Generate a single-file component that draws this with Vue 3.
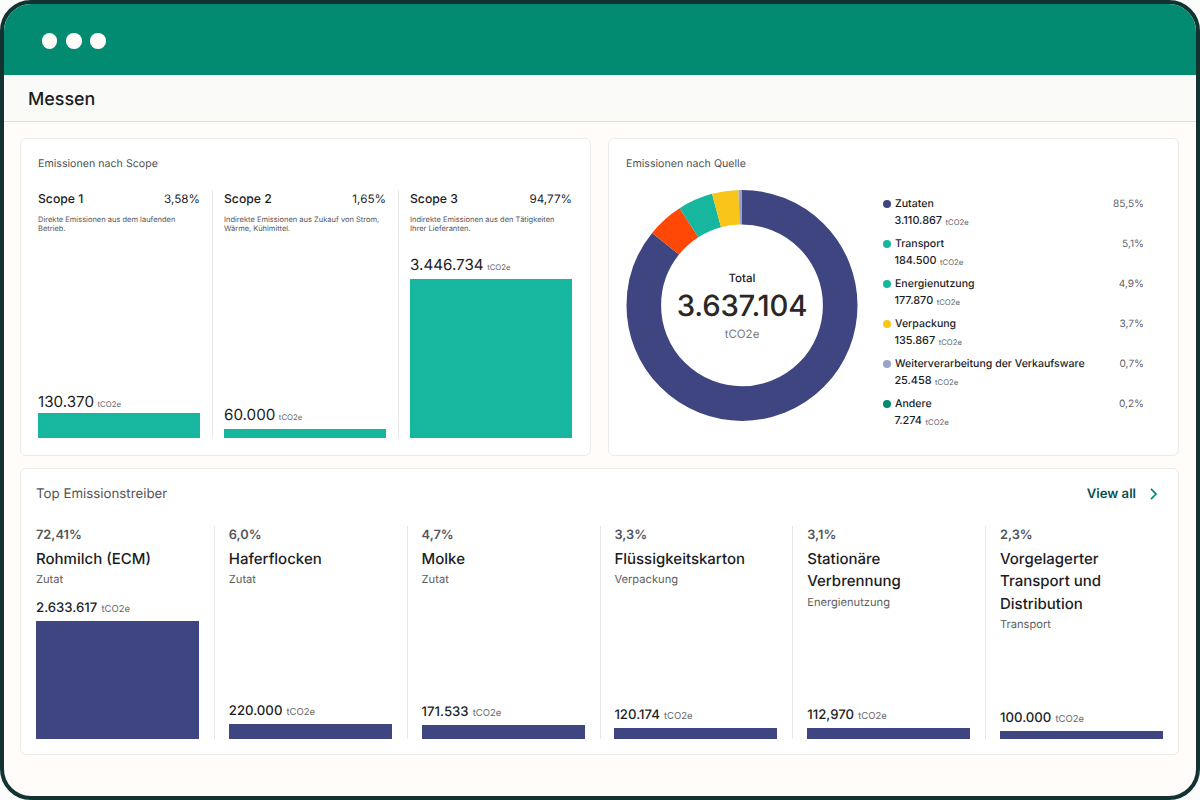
<script setup>
const scopes = [
  { name: 'Scope 1', percent: '3,58%', text: 'Direkte Emissionen aus dem laufenden Betrieb.', value: '130.370', bar: 25, gap: 0 },
  { name: 'Scope 2', percent: '1,65%', text: 'Indirekte Emissionen aus Zukauf von Strom, Wärme, Kühlmittel.', value: '60.000', bar: 9, gap: 3 },
  { name: 'Scope 3', percent: '94,77%', text: 'Indirekte Emissionen aus den Tätigkeiten Ihrer Lieferanten.', value: '3.446.734', bar: 159, gap: 3 }
];

const sources = [
  { name: 'Zutaten', value: '3.110.867', percent: '85,5%', color: '#3e4581' },
  { name: 'Transport', value: '184.500', percent: '5,1%', color: '#17b69f' },
  { name: 'Energienutzung', value: '177.870', percent: '4,9%', color: '#17b69f' },
  { name: 'Verpackung', value: '135.867', percent: '3,7%', color: '#fac519' },
  { name: 'Weiterverarbeitung der Verkaufsware', value: '25.458', percent: '0,7%', color: '#99a5c8' },
  { name: 'Andere', value: '7.274', percent: '0,2%', color: '#028b70' }
];

// start / end in grados
const segments = [
  { start: 0, end: 308.9, color: '#3e4581' },
  { start: 308.9, end: 327.3, color: '#ff4706' },
  { start: 327.3, end: 344.9, color: '#17b69f' },
  { start: 344.9, end: 358.2, color: '#fac519' },
  { start: 358.2, end: 359.6, color: '#99a5c8' },
  { start: 359.6, end: 360, color: '#17b69f' }
];

const drivers = [
  { percent: '72,41%', name: 'Rohmilch (ECM)', category: 'Zutat', value: '2.633.617', bar: 118 },
  { percent: '6,0%', name: 'Haferflocken', category: 'Zutat', value: '220.000', bar: 15 },
  { percent: '4,7%', name: 'Molke', category: 'Zutat', value: '171.533', bar: 14 },
  { percent: '3,3%', name: 'Flüssigkeitskarton', category: 'Verpackung', value: '120.174', bar: 11.5 },
  { percent: '3,1%', name: 'Stationäre Verbrennung', category: 'Energienutzung', value: '112,970', bar: 11.5 },
  { percent: '2,3%', name: 'Vorgelagerter Transport und Distribution', category: 'Transport', value: '100.000', bar: 8.5 }
];
</script>

<template>
  <div class="window">
    <div class="topbar">
      <span class="dot"></span>
      <span class="dot"></span>
      <span class="dot"></span>
    </div>
    <header class="page-header">
      <h1>Messen</h1>
    </header>

    <main class="content">
      <div class="row">
        <section class="card">
          <h2>Emissionen nach Scope</h2>
          <div class="scopes">
            <div v-for="s in scopes" :key="s.name" class="scope">
              <div class="scope-head">
                <span class="scope-name">{{ s.name }}</span>
                <span class="scope-percent">{{ s.percent }}</span>
              </div>
              <p class="scope-text">{{ s.text }}</p>
              <div class="scope-value" :style="{ marginBottom: s.gap + 'px' }">
                {{ s.value }} <small>tCO2e</small>
              </div>
              <div class="scope-bar" :style="{ height: s.bar + 'px' }"></div>
            </div>
          </div>
        </section>

        <section class="card">
          <h2>Emissionen nach Quelle</h2>
          <div class="sources">
            <div class="donut">
              <svg width="232" height="232" viewBox="-116 -116 232 232">
                <circle
                  v-for="seg in segments"
                  :key="seg.start"
                  r="98.2"
                  fill="none"
                  stroke-width="34.6"
                  pathLength="360"
                  transform="translate(0 0.4) rotate(-90)"
                  :stroke="seg.color"
                  :stroke-dasharray="`${seg.end - seg.start} 360`"
                  :stroke-dashoffset="-seg.start"
                />
              </svg>
              <div class="donut-label">
                <span class="donut-title">Total</span>
                <span class="donut-total">3.637.104</span>
                <span class="donut-unit">tCO2e</span>
              </div>
            </div>
            <ul class="legend">
              <li v-for="s in sources" :key="s.name">
                <span class="bullet" :style="{ background: s.color }"></span>
                <div class="legend-info">
                  <div class="legend-name">{{ s.name }}</div>
                  <div class="legend-value">{{ s.value }} <small>tCO2e</small></div>
                </div>
                <span class="legend-percent">{{ s.percent }}</span>
              </li>
            </ul>
          </div>
        </section>
      </div>

      <section class="card card-drivers">
        <div class="drivers-head">
          <h3>Top Emissionstreiber</h3>
          <a class="view-all">
            View all
            <svg width="8" height="12" viewBox="0 0 8 12">
              <path d="M1 0.9 L6 6 L1 11.1" fill="none" stroke="#028b70" stroke-width="1.7" />
            </svg>
          </a>
        </div>
        <div class="drivers">
          <div v-for="d in drivers" :key="d.name" class="driver">
            <div class="driver-percent">{{ d.percent }}</div>
            <div class="driver-name">{{ d.name }}</div>
            <div class="driver-category">{{ d.category }}</div>
            <div class="driver-value">{{ d.value }} <small>tCO2e</small></div>
            <div class="driver-bar" :style="{ height: d.bar + 'px' }"></div>
          </div>
        </div>
      </section>
    </main>
  </div>
</template>

<style>
body {
  margin: 0;
  background: #fbfdfc;
}
</style>

<style scoped>
.window {
  width: 1200px;
  height: 800px;
  box-sizing: border-box;
  border: 4px solid #133331;
  border-radius: 31px;
  overflow: hidden;
  background: #fffcf9;
  font-family: Inter, sans-serif;
  color: #1c1d1f;
  text-rendering: geometricPrecision;
}

.topbar {
  height: 71px;
  box-sizing: border-box;
  padding: 3px 0 0 38px;
  display: flex;
  align-items: center;
  gap: 8.8px;
  background: #028b70;
}

.dot {
  width: 15.4px;
  height: 15.4px;
  border-radius: 50%;
  background: #fffcf9;
}

.page-header {
  height: 47px;
  box-sizing: border-box;
  padding: 2px 0 0 24px;
  display: flex;
  align-items: center;
  background: #fafaf8;
  border-bottom: 1px solid #dfe0df;
}

h1 {
  margin: 0;
  font-size: 17.9px;
  font-weight: 450;
}

.content {
  padding: 16px 17px 0 16px;
  display: flex;
  flex-direction: column;
  gap: 12px;
}

.row {
  display: flex;
  justify-content: space-between;
}

.card {
  width: 571px;
  height: 318px;
  box-sizing: border-box;
  padding: 17px;
  background: #fff;
  border: 1px solid #ebebea;
  border-radius: 6px;
}

h2 {
  margin: 0;
  font-size: 10.65px;
  line-height: 16px;
  font-weight: 400;
  color: #4f5052;
}

/* Scopes */
.scopes {
  display: flex;
  margin-top: 18px;
}

.scope {
  flex: none;
  width: 162px;
  height: 248px;
  padding-right: 12px;
  display: flex;
  flex-direction: column;
}

.scope + .scope {
  padding-left: 11px;
  border-left: 1px solid #e8e8e8;
}

.scope:last-child {
  padding-right: 0;
}

.scope-head {
  display: flex;
  justify-content: space-between;
  font-size: 12.2px;
  line-height: 18px;
}

.scope-name {
  font-weight: 500;
}

.scope-percent {
  font-size: 11.7px;
}

.scope-text {
  margin: 7px 5px 0 0;
  font-size: 7.5px;
  line-height: 9.3px;
  color: #55565a;
}

.scope-value {
  margin-top: auto;
  font-size: 15.2px;
  line-height: 18px;
}

small {
  font-weight: 400;
  color: #66676c;
}

.scope-value small {
  margin-left: -0.8px;
  font-size: 7.8px;
}

.scope-bar {
  flex: none;
  background: #17b69f;
}

/* Dona + leyenda */
.sources {
  display: flex;
  margin-top: 17px;
}

.donut {
  position: relative;
  width: 232px;
  height: 232px;
}

.donut svg {
  display: block;
}

.donut-label {
  position: absolute;
  inset: 0;
  display: flex;
  flex-direction: column;
  align-items: center;
  padding-top: 80.5px;
}

.donut-title {
  font-size: 11.5px;
  line-height: 16px;
  font-weight: 500;
}

.donut-total {
  margin: 1.5px 0 -1.5px;
  font-size: 29.3px;
  line-height: 40px;
  font-weight: 450;
  letter-spacing: -0.2px;
  color: #292826;
}

.donut-unit {
  font-size: 11.5px;
  line-height: 16px;
  color: #77787c;
}

.legend {
  flex: 1;
  margin: 7px 17px 0 25px;
  padding: 0;
  list-style: none;
}

.legend li {
  display: flex;
  height: 40.1px;
}

.bullet {
  width: 8px;
  height: 8px;
  margin: 4px 4px 0 0;
  border-radius: 50%;
}

.legend-info {
  flex: 1;
  line-height: 16px;
  font-weight: 500;
}

.legend-name {
  font-size: 10.55px;
}

.legend-value {
  margin-left: -0.6px;
  font-size: 10.9px;
}

.legend-value small {
  margin-left: 0.6px;
  font-size: 7.7px;
  line-height: 8px;
  vertical-align: -1px;
}

.legend-percent {
  font-size: 10.1px;
  line-height: 16px;
  color: #5d5f6e;
}

/* Top Emissionstreiber */
.card-drivers {
  width: 1159px;
  height: 287px;
  padding: 15px 15px;
}

.drivers-head {
  display: flex;
  justify-content: space-between;
  align-items: center;
  height: 20px;
}

h3 {
  margin: 0;
  font-size: 13.3px;
  line-height: 18px;
  font-weight: 400;
  color: #555659;
}

.view-all {
  display: flex;
  align-items: center;
  gap: 14px;
  padding-right: 5px;
  font-size: 13.1px;
  line-height: 18px;
  font-weight: 600;
  color: #07504a;
}

.drivers {
  display: flex;
  margin-top: 22px;
}

.driver {
  flex: none;
  width: 163px;
  height: 213.4px;
  padding-right: 15px;
  display: flex;
  flex-direction: column;
}

.driver + .driver {
  padding-left: 13.8px;
  border-left: 1px solid #e6e6e6;
}

.driver:last-child {
  padding-right: 0;
}

.driver-percent {
  padding-top: 1px;
  font-size: 12.8px;
  line-height: 18px;
  font-weight: 600;
  color: #55565a;
}

.driver-name {
  margin-top: 3px;
  font-size: 15px;
  line-height: 22.4px;
  font-weight: 500;
}

.driver-category {
  margin-top: 0.7px;
  font-size: 11.15px;
  line-height: 17px;
  color: #5e5f63;
}

.driver-value {
  margin-top: auto;
  margin-bottom: 2px;
  font-size: 13.2px;
  line-height: 18px;
  font-weight: 500;
}

.driver-value small {
  margin-left: 0.6px;
  font-size: 9.5px;
}

.driver-bar {
  flex: none;
  background: #3e4581;
}
</style>
